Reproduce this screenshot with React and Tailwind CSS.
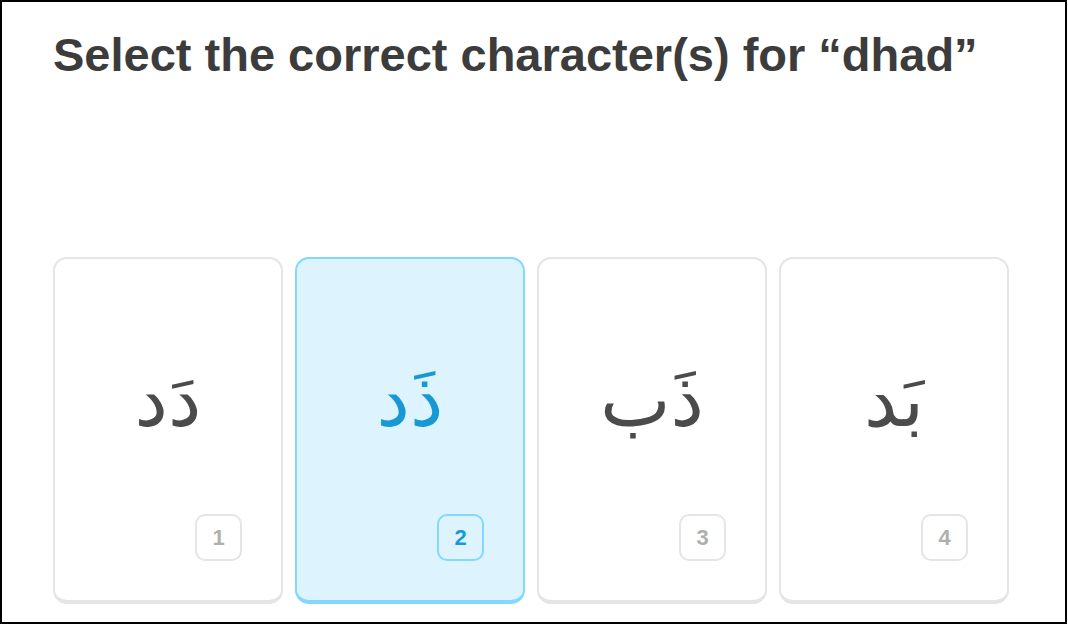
import React from 'react';

const choices = [
  { id: 1, text: 'دَد' },
  { id: 2, text: 'ذَد', selected: true },
  { id: 3, text: 'ذَب' },
  { id: 4, text: 'بَد' },
];

const ChoiceCard = ({ choice }) => {
  const sel = choice.selected;
  return (
    <div
      className={`flex flex-col h-[347px] rounded-[14px] border-2 border-b-4 ${
        sel ? 'bg-[#ddf4ff] border-[#84d8ff]' : 'bg-white border-[#e5e5e5]'
      }`}
    >
      <div className="flex-1 flex justify-center pt-[104px]">
        <span
          dir="rtl"
          className={`text-[75px] leading-none ${sel ? 'text-[#1899d6]' : 'text-[#4b4b4b]'}`}
          style={{ fontFamily: '"DejaVu Sans", sans-serif' }}
        >
          {choice.text}
        </span>
      </div>
      <div className="flex justify-end pr-[39px] pb-[39px]">
        <div
          className={`w-[47px] h-[47px] flex items-center justify-center rounded-[10px] border-2 text-[22px] font-bold ${
            sel ? 'border-[#84d8ff] text-[#1899d6]' : 'border-[#e5e5e5] text-[#afafaf]'
          }`}
        >
          {choice.id}
        </div>
      </div>
    </div>
  );
};

export default function App() {
  return (
    <div className="w-[1068px] h-[626px] bg-white" style={{ fontFamily: '"Liberation Sans", Arial, sans-serif' }}>
      <div className="w-[1067px] h-[624px] border-2 border-black bg-white px-[51px] pt-[29px]">
        <h1 className="text-[47px] leading-none font-bold text-[#3c3c3c]">
          Select the correct character(s) for “dhad”
        </h1>
        <div className="mt-[179px] grid grid-cols-4 gap-3 w-[956px]">
          {choices.map((c) => (
            <ChoiceCard key={c.id} choice={c} />
          ))}
        </div>
      </div>
    </div>
  );
}
